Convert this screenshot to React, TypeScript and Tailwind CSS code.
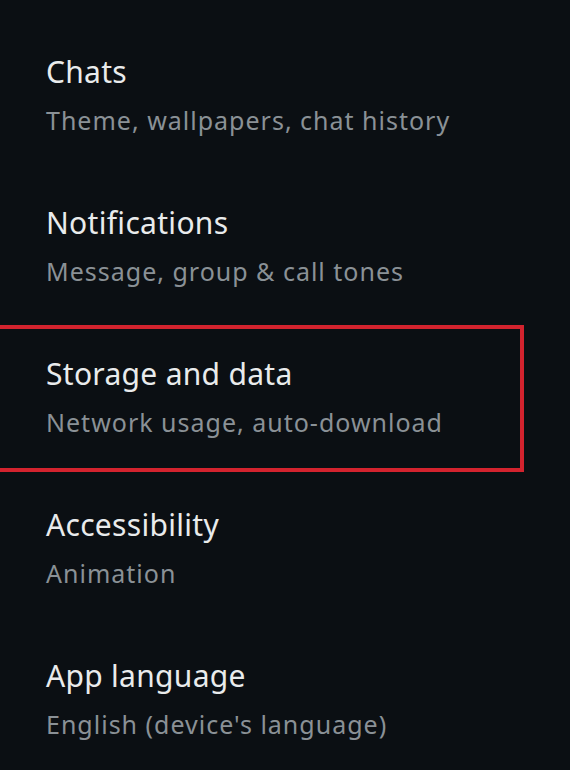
const items = [
  { title: "Chats", sub: "Theme, wallpapers, chat history" },
  { title: "Notifications", sub: "Message, group & call tones" },
  { title: "Storage and data", sub: "Network usage, auto-download", marked: true },
  { title: "Accessibility", sub: "Animation" },
  { title: "App language", sub: "English (device's language)" },
];

export default function App() {
  return (
    <div
      className="w-[570px] h-[770px] overflow-hidden bg-[#0b0f13] pt-[24px]"
      style={{ fontFamily: '"Noto Sans", "Open Sans", sans-serif' }}
    >
      {items.map((it) => (
        <div key={it.title} className="relative h-[151px] pl-[46px] pt-[30px]">
          <div className="text-[30px] leading-[36px] tracking-[0.3px] text-[#e9ebec]">{it.title}</div>
          <div className="mt-[14px] text-[25px] leading-[32px] tracking-[1px] text-[#8a9196]">{it.sub}</div>
          {it.marked && (
            <div className="absolute left-[-4px] top-[-1px] w-[528px] h-[147px] border-4 border-[#d3232e]" />
          )}
        </div>
      ))}
    </div>
  );
}
